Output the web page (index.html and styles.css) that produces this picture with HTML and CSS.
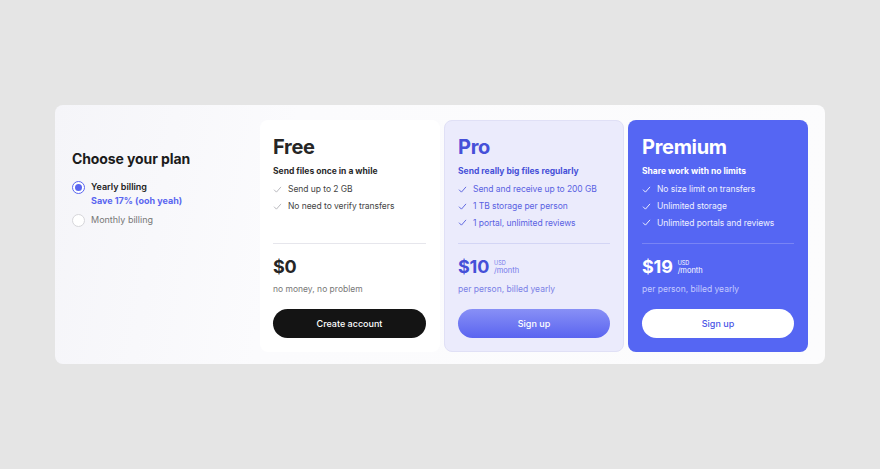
FILE: index.html
```html
<!DOCTYPE html>
<html>
<head>
<meta charset="utf-8">
<link rel="stylesheet" href="styles.css">
</head>
<body>
<div class="panel">
  <div class="intro">
    <h2 class="intro-title">Choose your plan</h2>
    <div class="option selected">
      <span class="radio"><span class="radio-dot"></span></span>
      <div class="option-text">
        <div class="option-label">Yearly billing</div>
        <div class="option-save">Save 17% (ooh yeah)</div>
      </div>
    </div>
    <div class="option">
      <span class="radio"></span>
      <div class="option-text">
        <div class="option-label muted">Monthly billing</div>
      </div>
    </div>
  </div>

  <div class="card card-free">
    <div class="card-top">
      <h3 class="plan-name">Free</h3>
      <div class="plan-sub">Send files once in a while</div>
      <ul class="features">
        <li><svg class="check" viewBox="0 0 10 8"><path d="M1 4.2 L3.8 7 L9 1"/></svg>Send up to 2 GB</li>
        <li><svg class="check" viewBox="0 0 10 8"><path d="M1 4.2 L3.8 7 L9 1"/></svg>No need to verify transfers</li>
      </ul>
    </div>
    <div class="price-row"><span class="price">$0</span></div>
    <div class="price-note">no money, no problem</div>
    <button class="btn btn-dark">Create account</button>
  </div>

  <div class="card card-pro">
    <div class="card-top">
      <h3 class="plan-name">Pro</h3>
      <div class="plan-sub">Send really big files regularly</div>
      <ul class="features">
        <li><svg class="check" viewBox="0 0 10 8"><path d="M1 4.2 L3.8 7 L9 1"/></svg>Send and receive up to 200 GB</li>
        <li><svg class="check" viewBox="0 0 10 8"><path d="M1 4.2 L3.8 7 L9 1"/></svg>1 TB storage per person</li>
        <li><svg class="check" viewBox="0 0 10 8"><path d="M1 4.2 L3.8 7 L9 1"/></svg>1 portal, unlimited reviews</li>
      </ul>
    </div>
    <div class="price-row"><span class="price">$10</span><span class="per"><span class="cur">USD</span><span class="unit">/month</span></span></div>
    <div class="price-note">per person, billed yearly</div>
    <button class="btn btn-grad">Sign up</button>
  </div>

  <div class="card card-premium">
    <div class="card-top">
      <h3 class="plan-name">Premium</h3>
      <div class="plan-sub">Share work with no limits</div>
      <ul class="features">
        <li><svg class="check" viewBox="0 0 10 8"><path d="M1 4.2 L3.8 7 L9 1"/></svg>No size limit on transfers</li>
        <li><svg class="check" viewBox="0 0 10 8"><path d="M1 4.2 L3.8 7 L9 1"/></svg>Unlimited storage</li>
        <li><svg class="check" viewBox="0 0 10 8"><path d="M1 4.2 L3.8 7 L9 1"/></svg>Unlimited portals and reviews</li>
      </ul>
    </div>
    <div class="price-row"><span class="price">$19</span><span class="per"><span class="cur">USD</span><span class="unit">/month</span></span></div>
    <div class="price-note">per person, billed yearly</div>
    <button class="btn btn-white">Sign up</button>
  </div>
</div>
</body>
</html>
```
FILE: styles.css
```css
* { box-sizing: border-box; }
body {
  margin: 0;
  background: #e5e5e5;
  font-family: Inter, "Liberation Sans", sans-serif;
  width: 880px;
  height: 469px;
  overflow: hidden;
}
.panel {
  margin: 105px 0 0 55px;
  width: 770px;
  height: 259px;
  border-radius: 8px;
  background: linear-gradient(100deg, #f5f5f9 0%, #fbfbfd 30%, #fcfcfd 100%);
  display: flex;
  padding: 15px 17px 12px 0;
  gap: 4px;
}
.intro {
  width: 201px;
  padding: 30px 0 0 17px;
}
.intro-title {
  margin: 0 0 12px;
  font-size: 14px;
  line-height: 18px;
  font-weight: 700;
  color: #1b1b1b;
  letter-spacing: -0.1px;
}
.option {
  display: flex;
  gap: 6px;
  margin-bottom: 5px;
}
.radio {
  width: 13px;
  height: 13px;
  border-radius: 50%;
  border: 1px solid #d6d6da;
  background: #fff;
  margin-top: 0.5px;
  display: flex;
  align-items: center;
  justify-content: center;
  flex: none;
}
.selected .radio { border-color: #5a66f0; }
.radio-dot {
  width: 7px;
  height: 7px;
  border-radius: 50%;
  background: #5a66f0;
}
.option-label {
  font-size: 9px;
  line-height: 14px;
  font-weight: 600;
  color: #222;
}
.option-label.muted { font-weight: 400; color: #777; }
.option-save {
  font-size: 9px;
  line-height: 14px;
  font-weight: 700;
  color: #5a66f0;
}
.card {
  width: 180px;
  flex: none;
  border-radius: 8px;
  padding: 15px 14px 14px;
  display: flex;
  flex-direction: column;
}
.card-free { background: #fff; padding-left: 13px; }
.card-pro { background: #ebebfc; border: 1px solid #e0e0f6; padding: 14px 13px 13px; }
.card-premium { background: #5566f3; }
.card-top {
  height: 109px;
  border-bottom: 1px solid #e6e6ec;
}
.card-pro .card-top { border-color: #d3d5f5; }
.card-premium .card-top { border-color: #7884f5; }
.plan-name {
  margin: 0;
  font-size: 20px;
  line-height: 24px;
  font-weight: 700;
  color: #262626;
  letter-spacing: -0.3px;
}
.plan-sub {
  margin-top: 5px;
  font-size: 8.5px;
  line-height: 14px;
  font-weight: 700;
  color: #2a2a2a;
}
.features {
  list-style: none;
  margin: 3px 0 0;
  padding: 0;
}
.features li {
  display: flex;
  align-items: center;
  height: 16.7px;
  font-size: 8.5px;
  color: #444;
  letter-spacing: -0.05px;
}
.check {
  width: 9px;
  height: 7px;
  margin-right: 6px;
  fill: none;
  stroke: #b0b0b6;
  stroke-width: 1;
  flex: none;
}
.price-row {
  margin-top: 13px;
  display: flex;
  align-items: flex-start;
  height: 20px;
}
.price {
  font-size: 18px;
  line-height: 20px;
  font-weight: 700;
  color: #262626;
  letter-spacing: -0.2px;
}
.per {
  display: flex;
  flex-direction: column;
  margin: 3px 0 0 5px;
}
.cur { font-size: 5.5px; line-height: 6px; }
.unit { font-size: 7.5px; line-height: 9px; }
.price-note {
  margin-top: 6px;
  font-size: 8.5px;
  line-height: 12px;
  color: #777;
}
.btn {
  margin-top: 14px;
  height: 29px;
  border: none;
  border-radius: 15px;
  font-family: inherit;
  font-size: 9px;
  font-weight: 500;
  padding: 0;
}
.btn-dark { background: #141414; color: #fff; }
.btn-grad { background: linear-gradient(180deg, #8890f6 0%, #5a64f0 100%); color: #fff; }
.btn-white { background: #fff; color: #4b56e6; }

.card-pro .plan-name, .card-pro .plan-sub, .card-pro .price { color: #4650d8; }
.card-pro .features li { color: #5a62e2; }
.card-pro .check { stroke: #4f58dc; }
.card-pro .per { color: #7078ea; }
.card-pro .price-note { color: #7a80e6; }

.card-premium .plan-name, .card-premium .plan-sub, .card-premium .price, .card-premium .per { color: #fff; }
.card-premium .features li { color: #eef0ff; }
.card-premium .check { stroke: #fff; }
.card-premium .price-note { color: #c4caff; }
```
